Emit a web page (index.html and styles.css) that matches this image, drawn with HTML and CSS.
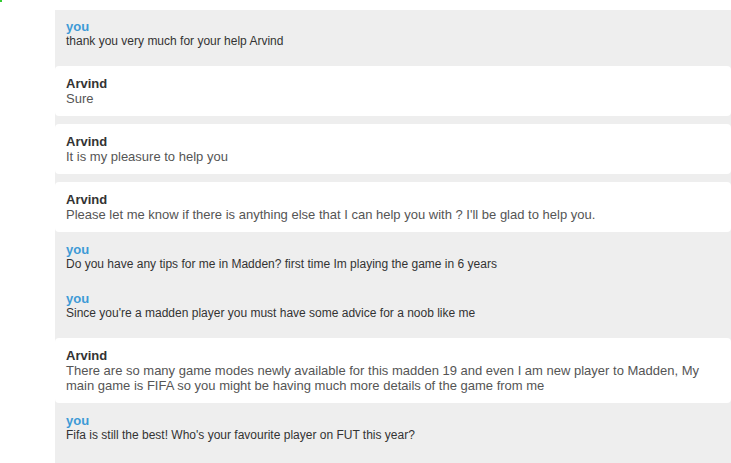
FILE: index.html
```html
<!DOCTYPE html>
<html>
<head>
<meta charset="utf-8">
<link rel="stylesheet" href="styles.css">
</head>
<body>
<span class="dot"></span>
<div class="page">
  <div class="chat">
    <div class="msg you">
      <div class="name">you</div>
      <div class="text">thank you very much for your help Arvind</div>
    </div>
    <div class="msg agent">
      <div class="name">Arvind</div>
      <div class="text">Sure</div>
    </div>
    <div class="msg agent">
      <div class="name">Arvind</div>
      <div class="text">It is my pleasure to help you</div>
    </div>
    <div class="msg agent">
      <div class="name">Arvind</div>
      <div class="text">Please let me know if there is anything else that I can help you with ? I'll be glad to help you.</div>
    </div>
    <div class="msg you">
      <div class="name">you</div>
      <div class="text">Do you have any tips for me in Madden? first time Im playing the game in 6 years</div>
    </div>
    <div class="msg you">
      <div class="name">you</div>
      <div class="text">Since you're a madden player you must have some advice for a noob like me</div>
    </div>
    <div class="msg agent">
      <div class="name">Arvind</div>
      <div class="text">There are so many game modes newly available for this madden 19 and even I am new player to Madden, My main game is FIFA so you might be having much more details of the game from me</div>
    </div>
    <div class="msg you">
      <div class="name">you</div>
      <div class="text">Fifa is still the best! Who's your favourite player on FUT this year?</div>
    </div>
  </div>
</div>
</body>
</html>
```

FILE: styles.css
```css
html, body {
  margin: 0;
  padding: 0;
  background: #ffffff;
  overflow: hidden;
}
body {
  font-family: "Liberation Sans", Arial, sans-serif;
}
.dot {
  position: absolute;
  left: 0;
  top: 0;
  width: 2px;
  height: 2px;
  background: #33cc33;
}
.page {
  padding: 10px 0 0 55px;
}
.chat {
  background: #eeeeee;
  padding-bottom: 40px;
  display: flex;
  flex-direction: column;
}
.msg {
  padding: 10px 11px 9px 11px;
}
.msg:first-child {
  padding: 9px 11px 9px 11px;
}
.name {
  font-weight: bold;
  font-size: 13px;
  line-height: 15px;
}
.you .name {
  color: #3d9ad6;
}
.you .text {
  font-size: 12px;
  line-height: 15px;
  color: #333333;
}
.agent {
  background: #ffffff;
  border-radius: 4px;
  margin-top: 8px;
  padding: 10px 11px 10px 11px;
}
.agent .name {
  color: #333333;
}
.agent .text {
  font-size: 13px;
  line-height: 15px;
  color: #555555;
}
```
